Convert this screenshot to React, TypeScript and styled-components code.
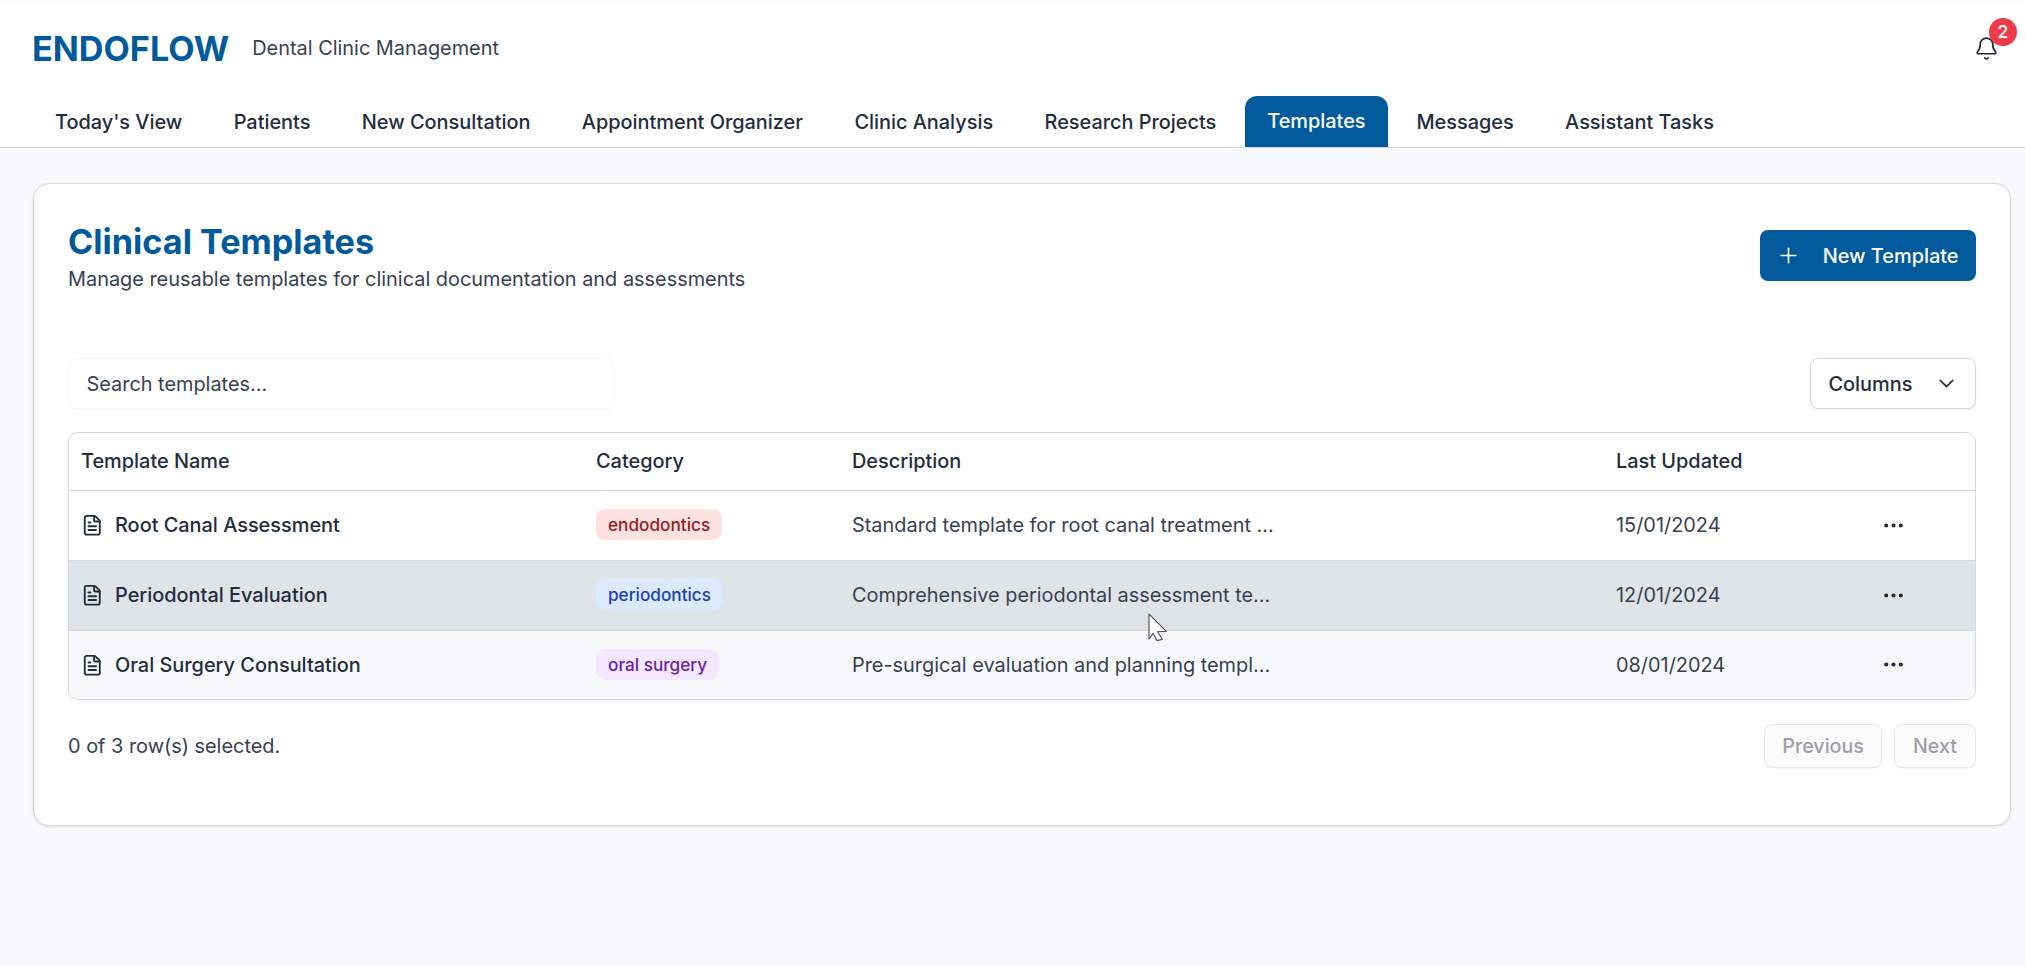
import React from "react";
import styled, { createGlobalStyle } from "styled-components";
import { Bell, ChevronDown, Ellipsis, FileText, Plus } from "lucide-react";

const GlobalStyle = createGlobalStyle`
  html, body { margin: 0; padding: 0; }
  body {
    background: #f8f9fb;
    color: #1f2937;
    font-family: Inter, "Noto Sans", "Liberation Sans", sans-serif;
    font-size: 19.9px;
    line-height: 30px;
  }
  * { box-sizing: border-box; }
`;

const Page = styled.div`
  position: relative;
  width: 2025px;
  height: 966px;
  overflow: hidden;
  padding-top: 1px;
`;

const Header = styled.header`
  background: #fff;
  border-bottom: 1px solid #d5d9df;
  height: 147px;
  display: flex;
  flex-direction: column;
`;

const TopRow = styled.div`
  display: flex;
  align-items: center;
  justify-content: space-between;
  height: 95px;
  padding: 0 26.5px 1px 32px;
`;

const Brand = styled.div`
  display: flex;
  align-items: center;
  gap: 23px;
`;

const Logo = styled.div`
  color: #005a9c;
  font-size: 34.2px;
  line-height: 37px;
  font-weight: 700;
`;

const Tagline = styled.div`
  color: #374151;
  font-size: 19.9px;
`;

const BellWrap = styled.div`
  position: relative;
  display: flex;
  width: 25px;
  height: 25px;
  color: #1f2937;
`;

const Badge = styled.span`
  position: absolute;
  top: -18px;
  right: -18.5px;
  width: 28px;
  height: 28px;
  border-radius: 50%;
  background: #ef3b4a;
  color: #fff;
  font-size: 17.5px;
  font-weight: 500;
  line-height: 28px;
  text-align: center;
`;

const Tabs = styled.nav`
  display: flex;
  align-items: flex-end;
  height: 51px;
  padding-left: 29.3px;
`;

const Tab = styled.a<{ $active?: boolean }>`
  height: 51px;
  padding: ${(p) => (p.$active ? "10px 22.5px 0" : "11px 25.7px 0")};
  margin: ${(p) => (p.$active ? "0 2.7px" : "0")};
  border-radius: 12px 12px 0 0;
  background: ${(p) => (p.$active ? "#005a9c" : "transparent")};
  color: ${(p) => (p.$active ? "#fff" : "#1f2d3d")};
  font-size: 19.9px;
  font-weight: 500;
  white-space: nowrap;
`;

const Main = styled.main`
  padding: 35px 14px 0 32.5px;
`;

const Card = styled.section`
  height: 643px;
  padding: 39px 34.5px 0;
  background: #fff;
  border: 1px solid #d5d9df;
  border-radius: 16px;
  box-shadow: 0 1px 3px rgba(0, 0, 0, 0.1);
`;

const CardHead = styled.div`
  display: flex;
  align-items: flex-start;
  justify-content: space-between;
  height: 135px;
`;

const Title = styled.h1`
  margin: 0;
  color: #005a9c;
  font-size: 34.2px;
  line-height: 37px;
  font-weight: 700;
`;

const Subtitle = styled.p`
  margin: 4px 0 0;
  color: #374151;
  font-size: 19.9px;
  line-height: 30px;
`;

const PrimaryButton = styled.button`
  display: flex;
  align-items: center;
  gap: 22px;
  height: 51px;
  margin-top: 7px;
  padding: 0 17px 0 16px;
  border: 0;
  border-radius: 8px;
  background: #005a9c;
  color: #fff;
  font: 500 19.9px/30px Inter, sans-serif;
`;

const Toolbar = styled.div`
  display: flex;
  justify-content: space-between;
  margin-bottom: 23px;
`;

const Search = styled.div`
  width: 546px;
  height: 51px;
  padding: 0 17.5px;
  display: flex;
  align-items: center;
  border-radius: 8px;
  border: 1px solid #f5f6f8;
  box-shadow: 0 1px 2px rgba(0, 0, 0, 0.04);
  color: #374151;
  font-size: 19.9px;
`;

const OutlineButton = styled.button`
  display: flex;
  align-items: center;
  justify-content: space-between;
  width: 166px;
  height: 51px;
  padding: 0 16px 0 18px;
  border: 1px solid #d5d9df;
  border-radius: 8px;
  background: #fff;
  box-shadow: 0 1px 2px rgba(0, 0, 0, 0.06);
  color: #1f2d3d;
  font: 500 19.9px/30px Inter, sans-serif;
`;

const TableFrame = styled.div`
  border: 1px solid #d5d9df;
  border-radius: 10px;
  overflow: hidden;
`;

const Table = styled.table`
  width: 100%;
  table-layout: fixed;
  border-collapse: collapse;
`;

const Col = styled.col<{ $w: number }>`
  width: ${(p) => p.$w}px;
`;

const HeadRow = styled.tr`
  height: 57px;
  border-bottom: 1px solid #d5d9df;
`;

const Th = styled.th`
  padding: 0 12px;
  text-align: left;
  color: #1f2d3d;
  font-size: 19.9px;
  font-weight: 500;
`;

const rowBg = { normal: "#fff", hover: "#dfe4e8", muted: "#f7f8fa" };

const Row = styled.tr<{ $tone: keyof typeof rowBg }>`
  height: 70px;
  background: ${(p) => rowBg[p.$tone]};
  border-bottom: 1px solid #d5d9df;
  &:last-child { border-bottom: 0; height: 69px; }
`;

const Td = styled.td`
  padding: 0 12px;
  color: #374151;
  font-size: 19.9px;
`;

const NameCell = styled.div`
  display: flex;
  align-items: center;
  gap: 11.5px;
  color: #1f2d3d;
  font-weight: 500;
  svg { flex: none; }
`;

const tagTones = {
  endodontics: { bg: "#fee2e2", fg: "#991b1b" },
  periodontics: { bg: "#dbeafe", fg: "#1e40af" },
  "oral surgery": { bg: "#f3e8ff", fg: "#6b21a8" },
};

const Tag = styled.span<{ $tone: keyof typeof tagTones }>`
  display: inline-block;
  padding: 3px 12px;
  border-radius: 9px;
  background: ${(p) => tagTones[p.$tone].bg};
  color: ${(p) => tagTones[p.$tone].fg};
  font-size: 17.2px;
  line-height: 25px;
  font-weight: 500;
  vertical-align: middle;
  position: relative;
  top: -1px;
`;

const ActionCell = styled.div`
  display: flex;
  color: #1f2d3d;
  margin-left: 7.5px;
`;

const Footer = styled.div`
  display: flex;
  align-items: center;
  justify-content: space-between;
  margin-top: 24px;
  color: #374151;
`;

const Pager = styled.div`
  display: flex;
  gap: 12px;
`;

const PageButton = styled.button`
  height: 44px;
  padding: 0 17.5px;
  border: 1px solid #e6e8ec;
  border-radius: 8px;
  background: #fbfbfc;
  box-shadow: 0 1px 2px rgba(0, 0, 0, 0.04);
  color: #9a9fa8;
  font: 500 19.7px/30px Inter, sans-serif;
`;

const Pointer = styled.svg`
  position: absolute;
  left: 1148px;
  top: 613px;
`;

const tabs = [
  "Today's View",
  "Patients",
  "New Consultation",
  "Appointment Organizer",
  "Clinic Analysis",
  "Research Projects",
  "Templates",
  "Messages",
  "Assistant Tasks",
];

const rows = [
  { name: "Root Canal Assessment", cat: "endodontics", desc: "Standard template for root canal treatment ...", date: "15/01/2024", tone: "normal" },
  { name: "Periodontal Evaluation", cat: "periodontics", desc: "Comprehensive periodontal assessment te...", date: "12/01/2024", tone: "hover" },
  { name: "Oral Surgery Consultation", cat: "oral surgery", desc: "Pre-surgical evaluation and planning templ...", date: "08/01/2024", tone: "muted" },
] as const;

export default function App() {
  return (
    <Page>
      <GlobalStyle />
      <Header>
        <TopRow>
          <Brand>
            <Logo>ENDOFLOW</Logo>
            <Tagline>Dental Clinic Management</Tagline>
          </Brand>
          <BellWrap>
            <Bell size={25} strokeWidth={1.6} />
            <Badge>2</Badge>
          </BellWrap>
        </TopRow>
        <Tabs>
          {tabs.map((t) => (
            <Tab key={t} $active={t === "Templates"}>{t}</Tab>
          ))}
        </Tabs>
      </Header>
      <Main>
        <Card>
          <CardHead>
            <div>
              <Title>Clinical Templates</Title>
              <Subtitle>Manage reusable templates for clinical documentation and assessments</Subtitle>
            </div>
            <PrimaryButton>
              <Plus size={25} strokeWidth={1.6} />
              New Template
            </PrimaryButton>
          </CardHead>
          <Toolbar>
            <Search>Search templates...</Search>
            <OutlineButton>
              Columns
              <ChevronDown size={25} strokeWidth={1.6} />
            </OutlineButton>
          </Toolbar>
          <TableFrame>
            <Table>
              <colgroup>
                <Col $w={515} />
                <Col $w={256} />
                <Col $w={764} />
                <Col $w={257} />
                <Col $w={114} />
              </colgroup>
              <thead>
                <HeadRow>
                  <Th>Template Name</Th>
                  <Th>Category</Th>
                  <Th>Description</Th>
                  <Th>Last Updated</Th>
                  <Th />
                </HeadRow>
              </thead>
              <tbody>
                {rows.map((r) => (
                  <Row key={r.name} $tone={r.tone}>
                    <Td>
                      <NameCell>
                        <FileText size={22.5} strokeWidth={2} />
                        {r.name}
                      </NameCell>
                    </Td>
                    <Td><Tag $tone={r.cat}>{r.cat}</Tag></Td>
                    <Td>{r.desc}</Td>
                    <Td>{r.date}</Td>
                    <Td>
                      <ActionCell><Ellipsis size={25} strokeWidth={2} /></ActionCell>
                    </Td>
                  </Row>
                ))}
              </tbody>
            </Table>
          </TableFrame>
          <Footer>
            <span>0 of 3 row(s) selected.</span>
            <Pager>
              <PageButton>Previous</PageButton>
              <PageButton>Next</PageButton>
            </Pager>
          </Footer>
        </Card>
      </Main>
      <Pointer width="20" height="30" viewBox="0 0 20 30">
        <path d="M1 1 L18.3 18.3 L9.6 18.7 L14.3 26.3 L9 27.7 L5 20.3 L1 26 Z" fill="#fff" stroke="#55595e" strokeWidth="1.2" strokeLinejoin="round" />
      </Pointer>
    </Page>
  );
}
